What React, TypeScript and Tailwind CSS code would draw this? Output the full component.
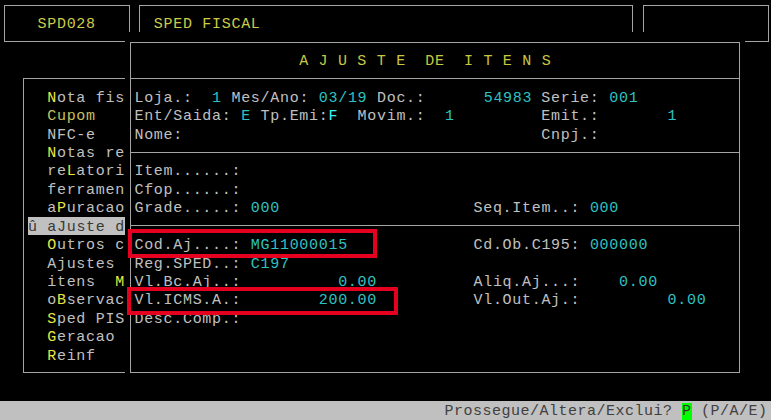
import React from "react";

type P = { children: React.ReactNode };
const C = ({ children }: P) => <span className="text-[#2ec2c2]">{children}</span>;
const Y = ({ children }: P) => <span className="text-[#e8e840]">{children}</span>;

export default function App() {
  return (
    <div className="relative w-[771px] h-[420px] overflow-hidden bg-black font-['Liberation_Mono',monospace] text-[15px] leading-[22px] tracking-[0.7px] text-[#c0c0c0]">
      <div className="ml-[-1.2px] mt-[-4.4px] grid grid-cols-[repeat(80,9.7px)] grid-rows-[repeat(23,18.43px)]">
        {/* top boxes */}
        <div className="col-[1/15] row-[1/4] grid">
          <div className="mx-[4.85px] my-[9.2px] border border-[#a4a4a4]" />
        </div>
        <div className="col-[15/67] row-[1/4] grid">
          <div className="mx-[4.85px] my-[9.2px] border border-[#a4a4a4]" />
        </div>
        <div className="col-[67/81] row-[1/4] grid">
          <div className="mx-[4.85px] my-[9.2px] border border-[#a4a4a4]" />
        </div>
        <div className="col-start-[5] row-start-[2] whitespace-pre text-[#cccc48]">SPD028</div>
        <div className="col-start-[17] row-start-[2] whitespace-pre text-[#cccc48]">SPED FISCAL</div>

        {/* menu panel */}
        <div className="col-[3/15] row-[5/22] grid bg-black">
          <div className="mx-[4.85px] my-[9.2px] border border-[#a4a4a4]" />
        </div>
        <div className="col-start-[6] row-start-[6] whitespace-pre"><Y>N</Y>ota fis</div>
        <div className="col-start-[6] row-start-[7] whitespace-pre text-[#c4c060]">Cupom</div>
        <div className="col-start-[6] row-start-[8] whitespace-pre">NFC-e</div>
        <div className="col-start-[6] row-start-[9] whitespace-pre"><Y>N</Y>otas re</div>
        <div className="col-start-[6] row-start-[10] whitespace-pre">re<Y>L</Y>atori</div>
        <div className="col-start-[6] row-start-[11] whitespace-pre">ferramen</div>
        <div className="col-start-[6] row-start-[12] whitespace-pre">a<Y>P</Y>uracao</div>
        <div className="col-[4/14] row-[13/14] whitespace-pre bg-[#c0c0c0] text-[#383838]">û aJuste d</div>
        <div className="col-start-[6] row-start-[14] whitespace-pre"><Y>O</Y>utros c</div>
        <div className="col-start-[6] row-start-[15] whitespace-pre">Ajustes</div>
        <div className="col-start-[6] row-start-[16] whitespace-pre">itens  <Y>M</Y></div>
        <div className="col-start-[6] row-start-[17] whitespace-pre">o<Y>B</Y>servac</div>
        <div className="col-start-[6] row-start-[18] whitespace-pre"><Y>S</Y>ped PIS</div>
        <div className="col-start-[6] row-start-[19] whitespace-pre"><Y>G</Y>eracao</div>
        <div className="col-start-[6] row-start-[20] whitespace-pre"><Y>R</Y>einf</div>

        {/* main panel */}
        <div className="col-[14/78] row-[3/22] grid bg-black">
          <div className="mx-[4.85px] my-[9.2px] border border-[#a4a4a4]" />
        </div>
        <div className="col-start-[32] row-start-[4] whitespace-pre text-[#c8c840]">A J U S T E  DE  I T E N S</div>
        <div className="col-[14/78] row-[5/6] self-center mx-[4.85px] border-t border-[#a4a4a4]" />

        <div className="col-start-[15] row-start-[6] whitespace-pre">
          Loja.:  <C>1</C> Mes/Ano: <C>03/19</C> Doc.:      <C>54983</C>
        </div>
        <div className="col-start-[57] row-start-[6] whitespace-pre">
          Serie: <C>001</C>
        </div>
        <div className="col-start-[15] row-start-[7] whitespace-pre">
          Ent/Saida: <C>E</C> Tp.Emi:<span className="text-[#3cf4f4]">F</span>  Movim.:  <C>1</C>
        </div>
        <div className="col-start-[57] row-start-[7] whitespace-pre">
          Emit.:       <C>1</C>
        </div>
        <div className="col-start-[15] row-start-[8] whitespace-pre">Nome:</div>
        <div className="col-start-[57] row-start-[8] whitespace-pre">Cnpj.:</div>

        <div className="col-[14/78] row-[9/10] self-center mx-[4.85px] border-t border-[#a4a4a4]" />

        <div className="col-start-[15] row-start-[10] whitespace-pre">Item......:</div>
        <div className="col-start-[15] row-start-[11] whitespace-pre">Cfop......:</div>
        <div className="col-start-[15] row-start-[12] whitespace-pre">
          Grade.....: <C>000</C>
        </div>
        <div className="col-start-[50] row-start-[12] whitespace-pre">
          Seq.Item..: <C>000</C>
        </div>

        <div className="col-[14/78] row-[13/14] self-center mx-[4.85px] border-t border-[#a4a4a4]" />

        <div className="col-start-[15] row-start-[14] whitespace-pre">
          Cod.Aj....: <C>MG11000015</C>
        </div>
        <div className="col-start-[50] row-start-[14] whitespace-pre">
          Cd.Ob.C195: <C>000000</C>
        </div>
        <div className="col-start-[15] row-start-[15] whitespace-pre">
          Reg.SPED..: <C>C197</C>
        </div>
        <div className="col-start-[15] row-start-[16] whitespace-pre">
          Vl.Bc.Aj..:          <C>0.00</C>
        </div>
        <div className="col-start-[50] row-start-[16] whitespace-pre">
          Aliq.Aj...:    <C>0.00</C>
        </div>
        <div className="col-start-[15] row-start-[17] whitespace-pre">
          Vl.ICMS.A.:        <C>200.00</C>
        </div>
        <div className="col-start-[50] row-start-[17] whitespace-pre">
          Vl.Out.Aj.:         <C>0.00</C>
        </div>
        <div className="col-start-[15] row-start-[18] whitespace-pre">Desc.Comp.:</div>

        {/* status bar */}
        <div className="col-[1/81] row-[23/24] mb-[-3px] bg-[#c0c0c0]" />
        <div className="col-start-[47] row-start-[23] whitespace-pre tracking-[0.5px] text-[#404040]">
          Prossegue/Altera/Exclui? <span className="bg-[#00ff00] text-[#303030]">P</span> (P/A/E)
        </div>
      </div>

      {/* annotation boxes */}
      <div className="absolute left-[128px] top-[229px] w-[249px] h-[29px] border-4 border-[#e4001e]" />
      <div className="absolute left-[127px] top-[287px] w-[271px] h-[28px] border-4 border-[#e4001e]" />
    </div>
  );
}
